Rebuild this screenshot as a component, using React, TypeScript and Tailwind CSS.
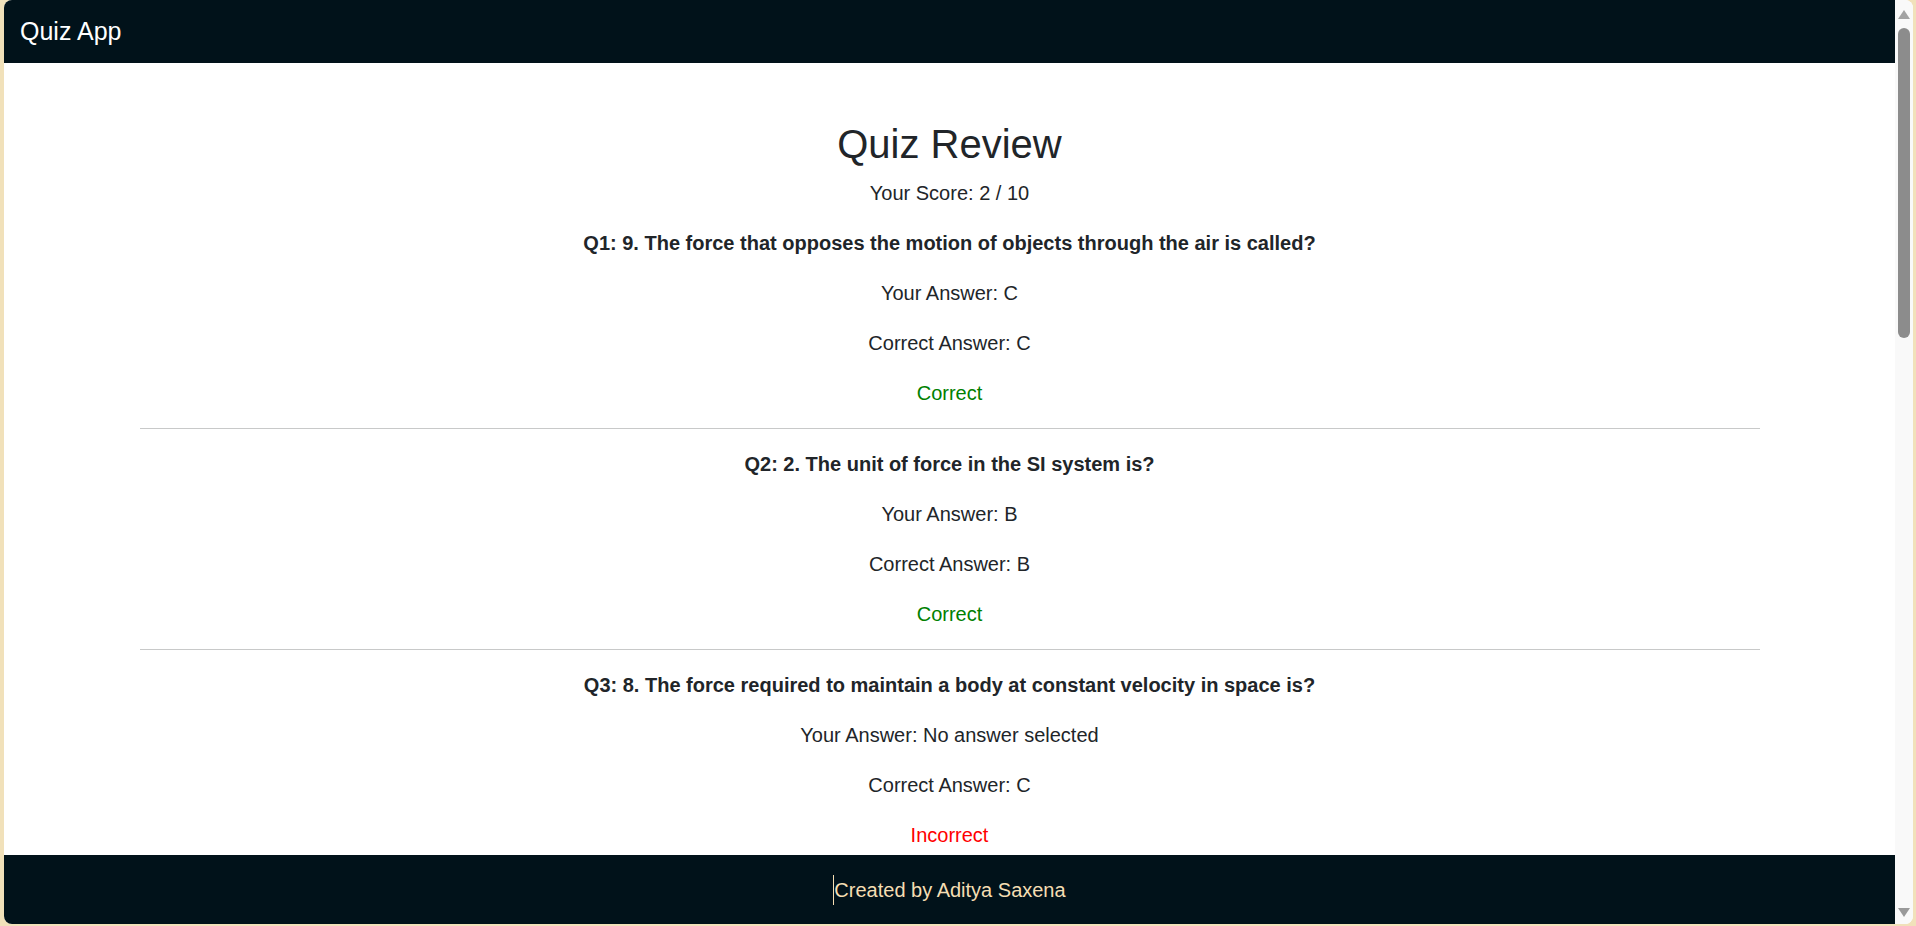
import React from "react";

type ReviewItem = {
  question: string;
  yourAnswer: string;
  correctAnswer: string;
};

const reviewItems: ReviewItem[] = [
  { question: "9. The force that opposes the motion of objects through the air is called?", yourAnswer: "C", correctAnswer: "C" },
  { question: "2. The unit of force in the SI system is?", yourAnswer: "B", correctAnswer: "B" },
  { question: "8. The force required to maintain a body at constant velocity in space is?", yourAnswer: "No answer selected", correctAnswer: "C" },
];

const ReviewRow = ({ index, item, last }: { index: number; item: ReviewItem; last: boolean }) => {
  const isCorrect = item.yourAnswer === item.correctAnswer;
  return (
    <div>
      <p className="mb-[20px] font-bold">{`Q${index + 1}: ${item.question}`}</p>
      <p className="mb-[20px]">Your Answer: {item.yourAnswer}</p>
      <p className="mb-[20px]">Correct Answer: {item.correctAnswer}</p>
      <p className={`mb-[20px] ${isCorrect ? "text-[#008000]" : "text-[#ff0000]"}`}>
        {isCorrect ? "Correct" : "Incorrect"}
      </p>
      {!last && <hr className="mt-[2px] mb-[20px] border-0 border-t border-[#c8c9c9]" />}
    </div>
  );
};

// window scrollbar, drawn since the page itself does not scroll here
const ScrollBar = () => (
  <div className="w-[18px] shrink-0 bg-[#f9f9f9] flex flex-col items-center">
    <svg width="12" height="9" viewBox="0 0 12 9" className="mt-[10px]">
      <polygon points="6,0 12,9 0,9" fill="#a3a3a3" />
    </svg>
    <div className="mt-[9px] h-[310px] w-[12px] rounded-full bg-[#8c8c8c]" />
    <div className="flex-1" />
    <svg width="12" height="9" viewBox="0 0 12 9" className="mb-[7px]">
      <polygon points="0,0 12,0 6,9" fill="#9a9a9a" />
    </svg>
  </div>
);

export default function App() {
  return (
    <div
      className="h-screen bg-[#f1e1ba] pl-[4px] pr-[3px] pb-[2px]"
      style={{ fontFamily: '"Liberation Sans", Arial, sans-serif' }}
    >
      <div className="h-full overflow-hidden rounded-[8px] bg-white flex">
        <div className="flex-1 min-w-0 flex flex-col">
          <header className="h-[63px] shrink-0 bg-[#01121a] flex items-center pl-[16px]">
            <span className="text-white text-[25px] leading-[1.5]">Quiz App</span>
          </header>

          <main className="flex-1 min-h-0 overflow-hidden pt-[57px]">
            <div className="mx-auto w-[1650px] px-[15px] text-center text-[#212529] text-[20px] leading-[30px]">
              <h1 className="text-[40px] leading-[48px] mb-[10px]">Quiz Review</h1>
              <p className="mb-[20px]">Your Score: 2 / 10</p>
              {reviewItems.map((item, i) => (
                <ReviewRow key={i} index={i} item={item} last={i === reviewItems.length - 1} />
              ))}
            </div>
          </main>

          <footer className="h-[69px] shrink-0 bg-[#01121a] flex items-center justify-center">
            <span className="text-[#f5deb3] text-[20px] leading-[30px] border-l border-[#f5deb3]">
              Created by Aditya Saxena
            </span>
          </footer>
        </div>
        <ScrollBar />
      </div>
    </div>
  );
}
